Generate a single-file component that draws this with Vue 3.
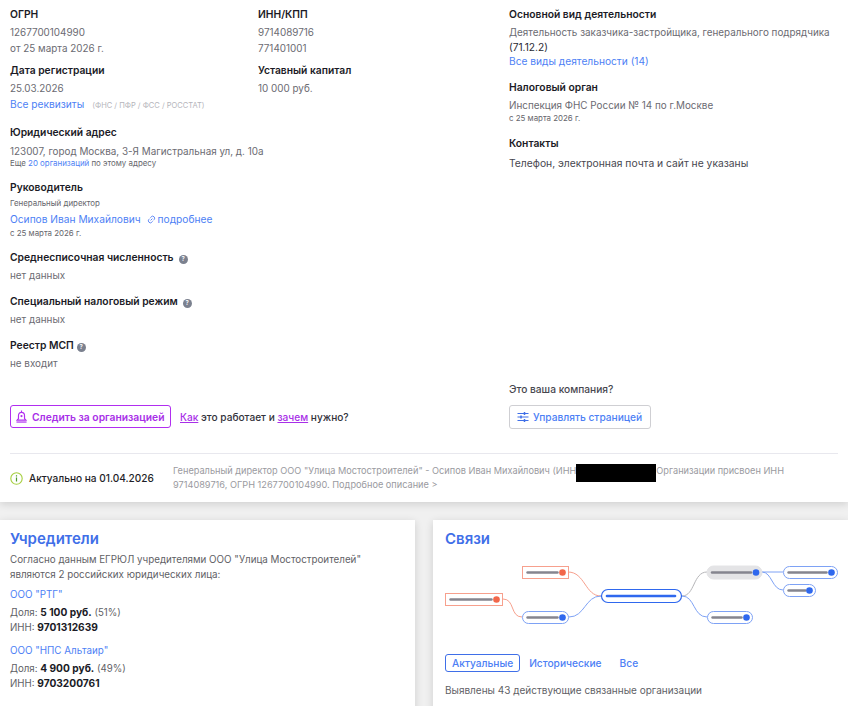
<script setup>
const paths = [
  ['M568 572C585 572 585 596 601 596', '#f7a08d'],
  ['M503 599C515 599 510 617 522 617', '#f7a08d'],
  ['M569 617C585 617 585 596 601 596', '#7ea2f5'],
  ['M682 596C695 596 693 572 707 572', '#b5b5b8'],
  ['M682 596C695 596 693 617 707 617', '#7ea2f5'],
  ['M762 572H783', '#7ea2f5'],
  ['M762 572C772 572 772 590 783 590', '#7ea2f5']
]
const nodes = [
  { x: 522.5, y: 566.5, w: 46, h: 12, s: '#f7a08d', r: 0, bar: 30, dot: '#f2674a' },
  { x: 445.5, y: 593.5, w: 57, h: 12, s: '#f7a08d', r: 0, bar: 41, dot: '#f2674a' },
  { x: 522.5, y: 611.5, w: 46, h: 12, s: '#7ea2f5', r: 6, bar: 30, dot: '#2f68ee' },
  { x: 707.5, y: 611.5, w: 45, h: 12, s: '#7ea2f5', r: 6, bar: 29, dot: '#2f68ee' },
  { x: 707, y: 566, w: 55, h: 13, s: '#e4e4e6', f: '#e4e4e6', r: 6.5, bar: 39, dot: '#2f68ee' },
  { x: 783.5, y: 566.5, w: 54, h: 12, s: '#7ea2f5', r: 6, bar: 38, dot: '#2f68ee' },
  { x: 783.5, y: 584.5, w: 32, h: 12, s: '#7ea2f5', r: 6, bar: 17, dot: '#2f68ee' }
]
</script>

<template>
  <div class="page">
    <section class="card top">
      <div class="columns">
        <div class="left">
          <div class="pair">
            <div>
              <div class="label">ОГРН</div>
              <div class="val first">1267700104990</div>
              <div class="val">от 25 марта 2026 г.</div>
            </div>
            <div>
              <div class="label">ИНН/КПП</div>
              <div class="val first">9714089716</div>
              <div class="val">771401001</div>
            </div>
            <div class="row2">
              <div class="label">Дата регистрации</div>
              <div class="val first">25.03.2026</div>
              <div class="val"><a class="link">Все реквизиты</a><span class="tiny-upper">(ФНС / ПФР / ФСС / РОССТАТ)</span></div>
            </div>
            <div class="row2">
              <div class="label">Уставный капитал</div>
              <div class="val first">10 000 руб.</div>
            </div>
          </div>

          <div class="b-addr">
            <div class="label">Юридический адрес</div>
            <div class="val addr">123007, город Москва, 3-Я Магистральная ул, д. 10а</div>
            <div class="small tight">Еще <a class="link">20 организаций</a> по этому адресу</div>
          </div>

          <div class="b-head">
            <div class="label">Руководитель</div>
            <div class="small pos">Генеральный директор</div>
            <div class="val person">
              <a class="link name">Осипов Иван Михайлович</a>
              <svg class="chain" viewBox="0 0 12 12" width="9" height="9" fill="none" stroke="#5b86f5" stroke-width="1.3"><path d="M4.800 7.200l2.400-2.400M4.500 3.500l1-1a2.400 2.400 0 0 1 4 3.600l-1 1M7.500 8.500l-1 1a2.400 2.400 0 0 1-4-3.600l1-1"/></svg>
              <a class="link more">подробнее</a>
            </div>
            <div class="small">с 25 марта 2026 г.</div>
          </div>

          <div class="b-stat">
            <div class="label">Среднесписочная численность<span class="q">?</span></div>
            <div class="val first">нет данных</div>
          </div>
          <div class="b-stat2">
            <div class="label">Специальный налоговый режим<span class="q">?</span></div>
            <div class="val first">нет данных</div>
          </div>
          <div class="b-stat2">
            <div class="label">Реестр МСП<span class="q near">?</span></div>
            <div class="val first">не входит</div>
          </div>

          <div class="follow">
            <button class="btn-follow">
              <svg viewBox="0 0 12 15" width="11" height="14" fill="none" stroke="#b12ef0" stroke-width="1.300"><path d="M6 .5v2M6 2.500c2.300 0 3.300 1.600 3.300 3.500v3.200l1.500 1.800H1.200l1.500-1.800V6c0-1.900 1-3.500 3.300-3.500z"/><path d="M.5 13h11" /><circle cx="6" cy="6.500" r="1.200" fill="#b12ef0" stroke="none"/></svg>
              Следить за организацией
            </button>
            <span class="how"><a class="plink">Как</a> это работает и <a class="plink">зачем</a> нужно?</span>
          </div>
        </div>

        <div class="right">
          <div class="label">Основной вид деятельности</div>
          <div class="val first">Деятельность заказчика-застройщика, генерального подрядчика</div>
          <div class="val dark">(71.12.2)</div>
          <div class="val tight1"><a class="link">Все виды деятельности (14)</a></div>

          <div class="b-tax">
            <div class="label">Налоговый орган</div>
            <div class="val first">Инспекция ФНС России № 14 по г.Москве</div>
            <div class="small tight1b">с 25 марта 2026 г.</div>
          </div>
          <div class="b-cont">
            <div class="label">Контакты</div>
            <div class="val contact">Телефон, электронная почта и сайт не указаны</div>
          </div>

          <div class="own">
            <div class="own-q">Это ваша компания?</div>
            <button class="btn-manage">
              <svg viewBox="0 0 12 12" width="12" height="12" fill="none" stroke="#3f6fe8" stroke-width="1.200"><path d="M.5 2.500h11M.5 6h11M.5 9.500h11"/><path d="M7.500 1v3M4 4.500v3M7.500 8v3" stroke-width="1.500"/></svg>
              Управлять страницей
            </button>
          </div>
        </div>
      </div>

      <div class="foot">
        <div class="actual">
          <svg viewBox="0 0 13 13" width="13" height="13"><circle cx="6.500" cy="6.500" r="5.700" fill="none" stroke="#a6cf3f" stroke-width="1.100"/><path d="M6.500 5.500v4M6.500 3.300v1.200" stroke="#4e9a2a" stroke-width="1.200"/></svg>
          Актуально на 01.04.2026
        </div>
        <p class="descr">Генеральный директор ООО "Улица Мостостроителей" - Осипов Иван Михайлович (ИНН<span class="redact"></span>Организации присвоен ИНН 9714089716, ОГРН 1267700104990. Подробное описание &gt;</p>
      </div>
    </section>

    <div class="bottom">
      <section class="card founders">
        <h2>Учредители</h2>
        <p class="intro">Согласно данным ЕГРЮЛ учредителями ООО "Улица Мостостроителей" являются 2 российских юридических лица:</p>
        <div class="org">
          <a class="link">ООО "РТГ"</a>
          <div class="share">Доля: <b>5 100 руб.</b> (51%)</div>
          <div class="share">ИНН: <b>9701312639</b></div>
        </div>
        <div class="org">
          <a class="link">ООО "НПС Альтаир"</a>
          <div class="share">Доля: <b>4 900 руб.</b> (49%)</div>
          <div class="share">ИНН: <b>9703200761</b></div>
        </div>
      </section>

      <section class="card links">
        <h2>Связи</h2>
        <svg class="graph" viewBox="445 558 403 84" width="403" height="84" fill="none">
          <path v-for="(p, i) in paths" :key="i" :d="p[0]" :stroke="p[1]" stroke-width="1"/>
          <g v-for="(n, i) in nodes" :key="'n' + i">
            <rect :x="n.x" :y="n.y" :width="n.w" :height="n.h" :rx="n.r" :stroke="n.s" :fill="n.f || '#fff'"/>
            <path :d="`M${n.x + 5} ${n.y + n.h / 2}h${n.bar}`" stroke="#85858f" stroke-width="2.400" stroke-linecap="round"/>
            <circle :cx="n.x + n.w - 6" :cy="n.y + n.h / 2" r="3.300" :fill="n.dot"/>
          </g>
          <rect x="601.500" y="589.500" width="80" height="13" rx="6.500" stroke="#2f68ee" stroke-width="1.200" fill="#fff"/>
          <path d="M607 596h68" stroke="#2f68ee" stroke-width="2.600" stroke-linecap="round"/>
        </svg>
        <div class="tabs">
          <span class="tab active">Актуальные</span>
          <span class="tab">Исторические</span>
          <span class="tab all">Все</span>
        </div>
        <p class="found">Выявлены 43 действующие связанные организации</p>
      </section>
    </div>
  </div>
</template>

<style scoped>
.page {
  height: 706px;
  overflow: hidden;
  background: #f0f0f0;
  font-family: Inter, "Noto Sans", sans-serif;
  font-size: 9.9px;
  color: #5f5f66;
}
.card {
  background: #fff;
  box-shadow: 0 2px 8px rgba(0, 0, 0, .14);
}
.top {
  height: 502px;
  box-sizing: border-box;
  padding: 6px 10px 0;
}
.columns { display: flex; height: 447px; box-sizing: border-box; padding-bottom: 24px; }
.left { width: 499px; flex: none; display: flex; flex-direction: column; }
.right { flex: 1; display: flex; flex-direction: column; }
.pair { display: grid; grid-template-columns: 248px 1fr; }
.row2 { margin-top: 6px; }
.label {
  font-size: 10.3px;
  line-height: 16px;
  font-weight: 600;
  color: #1b1b26;
  white-space: nowrap;
}
.val { line-height: 16px; white-space: nowrap; color: #6b6b72; }
.first { margin-top: 2px; }
.addr { margin-top: 3px; }
.dark { color: #2a2a33; margin-top: -1px; font-size: 10.200px; }
.tight1 { margin-top: -2px; }
.tight1b { margin-top: -1px; }
.contact { margin-top: 4px; color: #47474f; font-size: 10.300px; }
.link { color: #4d7ff5; font-size: 10.200px; }
.tiny-upper { margin-left: 8px; font-size: 7.500px; color: #b5b5bb; }
.small { font-size: 7.900px; line-height: 12px; color: #66666c; white-space: nowrap; }
.small .link { font-size: 7.900px; }
.tight { margin-top: -2px; }
.b-addr { margin-top: 10px; }
.b-head { margin-top: 10px; }
.pos { margin-top: 2px; }
.person { margin-top: 2px; display: flex; align-items: center; }
.chain { margin: 0 2px 0 6px; }
.b-stat { margin-top: 10px; }
.b-stat2 { margin-top: 10px; }
.q {
  display: inline-flex;
  align-items: center;
  justify-content: center;
  width: 9px;
  height: 9px;
  margin-left: 5px;
  border-radius: 50%;
  background: #7b818f;
  color: #fff;
  font-size: 6px;
}
.near { margin-left: 3px; }
.follow { margin-top: 34px; display: flex; align-items: center; }
.btn-follow {
  height: 23px;
  box-sizing: border-box;
  width: 161px;
  padding: 0 0 0 5px;
  display: flex;
  align-items: center;
  gap: 5px;
  background: #fff;
  border: 1px solid #b12ef0;
  border-radius: 3px;
  color: #a82fe8;
  font: 600 10.300px Inter, sans-serif;
  white-space: nowrap;
}
.how { margin-left: 9px; color: #33333b; font-weight: 500; font-size: 10.150px; }
.plink { color: #a82fe8; text-decoration: underline; }
.b-tax { margin-top: 10px; }
.b-cont { margin-top: 11px; }
.own { margin-top: auto; }
.own-q { line-height: 16px; color: #47474f; font-weight: 500; font-size: 10.200px; }
.btn-manage {
  margin-top: 8px;
  height: 24px;
  box-sizing: border-box;
  width: 142px;
  padding: 0 0 0 7px;
  display: flex;
  align-items: center;
  gap: 4px;
  background: #fff;
  border: 1px solid #cfcfd3;
  border-radius: 3px;
  color: #4d7ff5;
  font: 500 10.200px Inter, sans-serif;
  white-space: nowrap;
}
.foot {
  border-top: 1px solid #e8e8ee;
  display: flex;
  align-items: center;
  height: 49px;
  box-sizing: border-box;
}
.actual {
  width: 163px;
  flex: none;
  display: flex;
  align-items: center;
  gap: 6px;
  color: #1f1f28;
  font-weight: 500;
  font-size: 10.100px;
  white-space: nowrap;
}
.descr {
  margin: 0;
  width: 640px;
  font-size: 9.200px;
  line-height: 14px;
  color: #9a9aa0;
}
.redact {
  display: inline-block;
  width: 80px;
  height: 18px;
  background: #000;
  margin: -8px 0;
}
.bottom { margin-top: 18px; display: flex; justify-content: space-between; }
.founders, .links { width: 415px; height: 240px; box-sizing: border-box; padding: 9px 11px; }
.founders { padding-left: 10px; }
.links { padding-left: 12px; }
h2 {
  margin: 0;
  font-size: 15px;
  line-height: 20px;
  font-weight: 600;
  color: #3f6fe8;
}
.intro { margin: 3px 0 0; line-height: 15px; color: #5f5f66; font-size: 9.800px; width: 380px; }
.org { margin-top: 5px; line-height: 15px; }
.org + .org { margin-top: 8px; }
.org .link { display: block; line-height: 15px; font-size: 9.800px; }
.share { line-height: 15px; margin-top: 3px; font-size: 9.700px; }
.share + .share { margin-top: 0; }
.share b { color: #1b1b26; font-weight: 700; font-size: 10.200px; }
.graph { display: block; margin-top: 9px; }
.tabs { display: flex; margin-top: 12px; color: #4d7ff5; font-weight: 500; font-size: 10.200px; }
.tab { line-height: 16px; padding: 0 6px; border: 1px solid transparent; margin-right: -1px; white-space: nowrap; }
.tab + .tab { margin-left: 3px; }
.tab.all { margin-left: 5px; }
.active { border-color: #3f6fe8; border-radius: 3px; }
.found { margin: 10px 0 0; line-height: 16px; font-size: 10px; }
</style>
